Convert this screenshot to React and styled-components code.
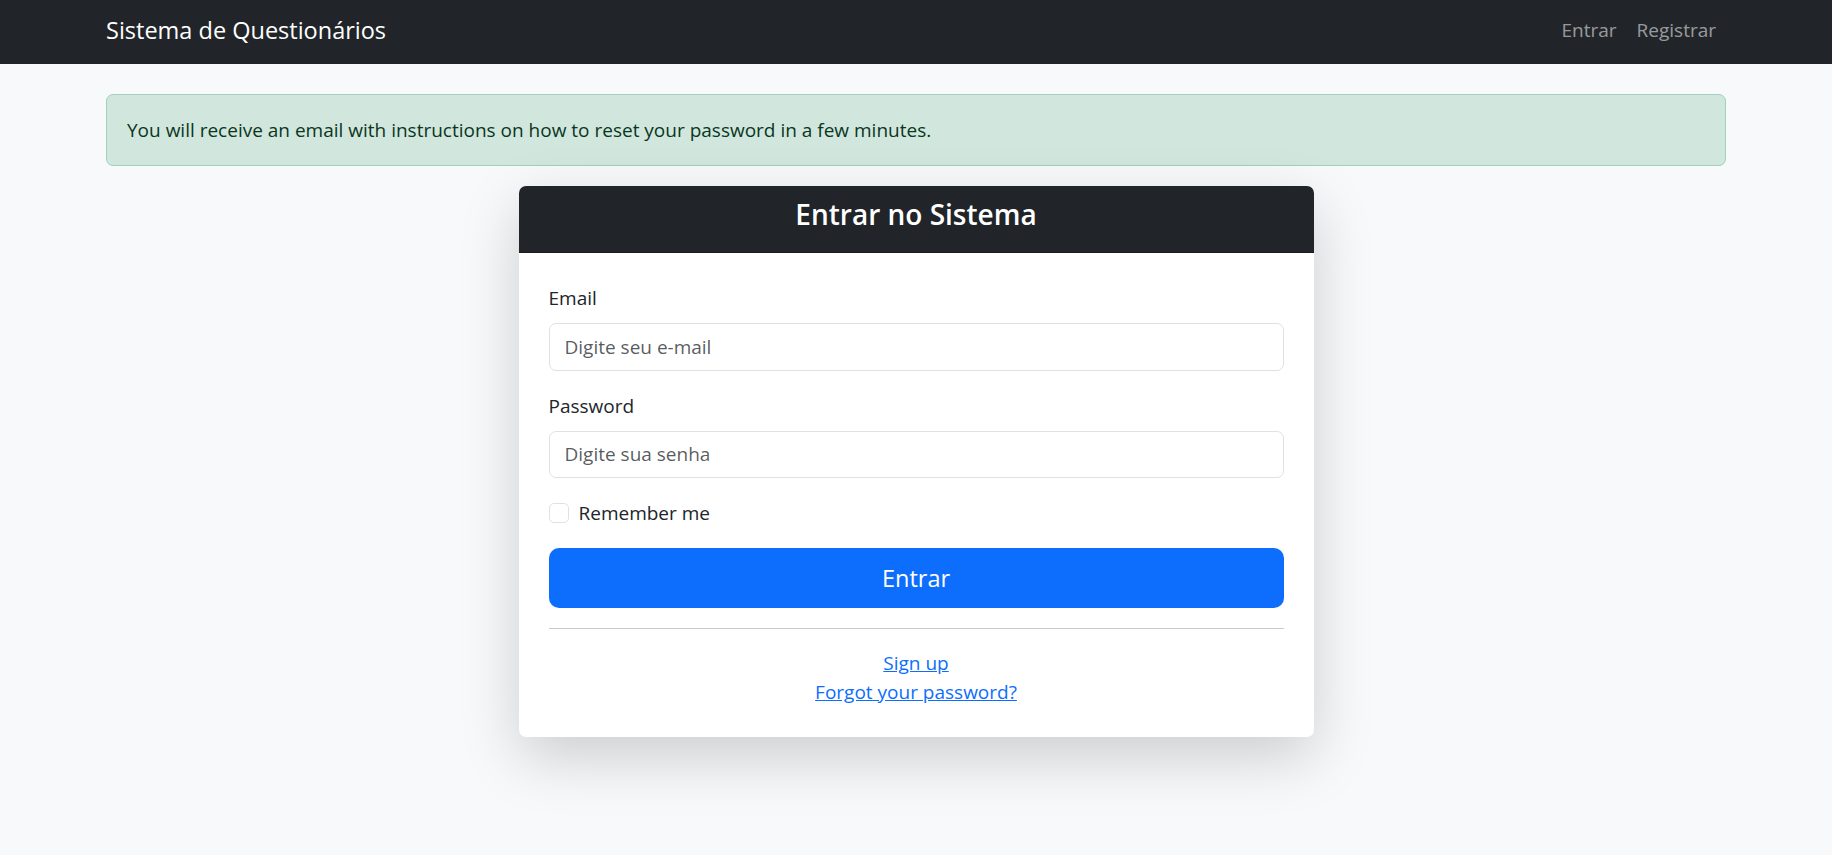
import React from 'react';
import styled, { createGlobalStyle } from 'styled-components';

const GlobalStyle = createGlobalStyle`
	* {
		box-sizing: border-box;
	}
	body {
		margin: 0;
		background: #f8f9fa;
		color: #212529;
		font-family: "Open Sans", "Noto Sans", "Liberation Sans", sans-serif;
		font-size: 19px;
		line-height: 30px;
	}
`;

const Page = styled.div`
	min-height: 100vh;
	padding-bottom: 100px;
`;

const Navbar = styled.nav`
	background: #212529;
	height: 64px;
	padding-bottom: 4px;
	display: flex;
	align-items: center;
`;

const NavInner = styled.div`
	width: 1620px;
	margin: 0 auto;
	display: flex;
	align-items: center;
	justify-content: space-between;
`;

const Brand = styled.a`
	color: #fff;
	font-size: 23.5px;
	line-height: 37px;
	text-decoration: none;
`;

const NavLinks = styled.div`
	display: flex;
`;

const NavLink = styled.a`
	color: rgba(255, 255, 255, 0.55);
	font-size: 19px;
	padding: 0 10px;
	text-decoration: none;
`;

const Main = styled.main`
	width: 1620px;
	margin: 30px auto 0;
`;

const Alert = styled.div`
	background: #d1e7dd;
	border: 1px solid #a3cfbb;
	color: #0a3622;
	border-radius: 7px;
	padding: 20px 20px;
	margin-bottom: 20px;
`;

const Card = styled.div`
	width: 795px;
	margin: 0 auto;
	background: #fff;
	border-radius: 7px;
	box-shadow: 0 20px 60px rgba(0, 0, 0, 0.175);
	overflow: hidden;
`;

const CardHeader = styled.div`
	background: #212529;
	color: #fff;
	padding: 10px 20px;
	border-bottom: 1px solid rgba(0, 0, 0, 0.175);
	text-align: center;
`;

const Title = styled.h4`
	margin: 0 0 10px;
	font-size: 28px;
	line-height: 36px;
	font-weight: 600;
`;

const CardBody = styled.div`
	padding: 30px;
`;

const Field = styled.div`
	margin-bottom: 20px;
`;

const Label = styled.label`
	display: block;
	margin-bottom: 10px;
`;

const Input = styled.input`
	display: block;
	width: 100%;
	height: 47.5px;
	padding: 0 15px;
	font: inherit;
	color: #212529;
	background: #fff;
	border: 1px solid #dee2e6;
	border-radius: 7px;
	outline: none;
	&::placeholder {
		color: rgba(33, 37, 41, 0.75);
	}
`;

const CheckRow = styled.label`
	display: flex;
	align-items: center;
	gap: 10px;
	height: 30px;
	margin-bottom: 20px;
`;

const CheckBox = styled.span`
	width: 20px;
	height: 20px;
	border: 1px solid #dee2e6;
	border-radius: 5px;
	background: #fff;
`;

const SubmitButton = styled.button`
	display: block;
	width: 100%;
	height: 60px;
	border: none;
	border-radius: 10px;
	background: #0d6efd;
	color: #fff;
	font: inherit;
	font-size: 23.5px;
`;

const Divider = styled.hr`
	margin: 20px 0;
	border: 0;
	border-top: 1px solid #c8c9ca;
`;

const Links = styled.div`
	text-align: center;
	line-height: 29px;
`;

const TextLink = styled.a`
	color: #0d6efd;
	text-decoration: underline;
`;

export default function App() {
	return (
		<Page>
			<GlobalStyle />
			<Navbar>
				<NavInner>
					<Brand href="#">Sistema de Questionários</Brand>
					<NavLinks>
						<NavLink href="#">Entrar</NavLink>
						<NavLink href="#">Registrar</NavLink>
					</NavLinks>
				</NavInner>
			</Navbar>
			<Main>
				<Alert>You will receive an email with instructions on how to reset your password in a few minutes.</Alert>
				<Card>
					<CardHeader>
						<Title>Entrar no Sistema</Title>
					</CardHeader>
					<CardBody>
						<Field>
							<Label>Email</Label>
							<Input type="email" placeholder="Digite seu e-mail" />
						</Field>
						<Field>
							<Label>Password</Label>
							<Input type="password" placeholder="Digite sua senha" />
						</Field>
						<CheckRow>
							<CheckBox />
							Remember me
						</CheckRow>
						<SubmitButton>Entrar</SubmitButton>
						<Divider />
						<Links>
							<TextLink href="#">Sign up</TextLink>
							<br />
							<TextLink href="#">Forgot your password?</TextLink>
						</Links>
					</CardBody>
				</Card>
			</Main>
		</Page>
	);
}
